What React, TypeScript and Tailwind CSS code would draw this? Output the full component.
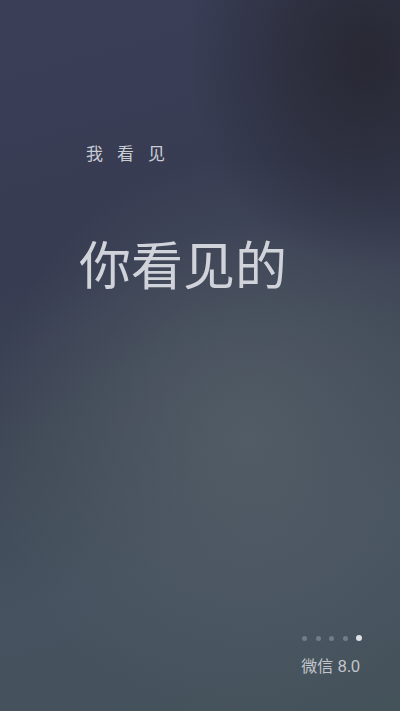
import React from "react";

const Dots = () => {
  const dots = [0, 1, 2, 3, 4];
  return (
    <div className="flex items-center gap-[8.5px] -mr-[2px]">
      {dots.map((i) => (
        <span
          key={i}
          className={
            i === 4
              ? "w-[6px] h-[6px] rounded-full bg-[#dfe2e6]"
              : "w-[5px] h-[5px] rounded-full bg-[#737c87]"
          }
        />
      ))}
    </div>
  );
};

const App = () => {
  return (
    <div
      className="w-[400px] h-[711px] overflow-hidden flex flex-col bg-[radial-gradient(ellipse_45%_30%_at_92%_8%,#272833_0%,rgba(39,40,51,0.6)_45%,rgba(39,40,51,0)_100%),radial-gradient(ellipse_65%_40%_at_62%_62%,#525c66_0%,rgba(82,92,102,0)_100%),linear-gradient(165deg,#3a3e57_0%,#373c52_35%,#3f4856_55%,#465260_75%,#44525a_100%)]"
      style={{ fontFamily: '"Noto Sans CJK SC", "Noto Sans", sans-serif' }}
    >
      <div className="pl-[86px] pt-[141px]">
        <p className="text-[17px] leading-[24px] tracking-[14px] text-[#c9ccd3]">
          我看见
        </p>
      </div>
      <div className="pl-[79px] pt-[66px]">
        <h1 className="text-[52px] leading-[64px] text-[#d0d3d9]">
          你看见的
        </h1>
      </div>
      <div className="flex-1" />
      <div className="flex flex-col items-end pr-[40px] pb-[34px] gap-[16px]">
        <Dots />
        <p
          className="text-[16px] leading-[20px] text-[#c3c7cd]"
          style={{ fontFamily: '"Liberation Sans", "Noto Sans CJK SC", sans-serif' }}
        >
          微信 8.0
        </p>
      </div>
    </div>
  );
};

export default App;
